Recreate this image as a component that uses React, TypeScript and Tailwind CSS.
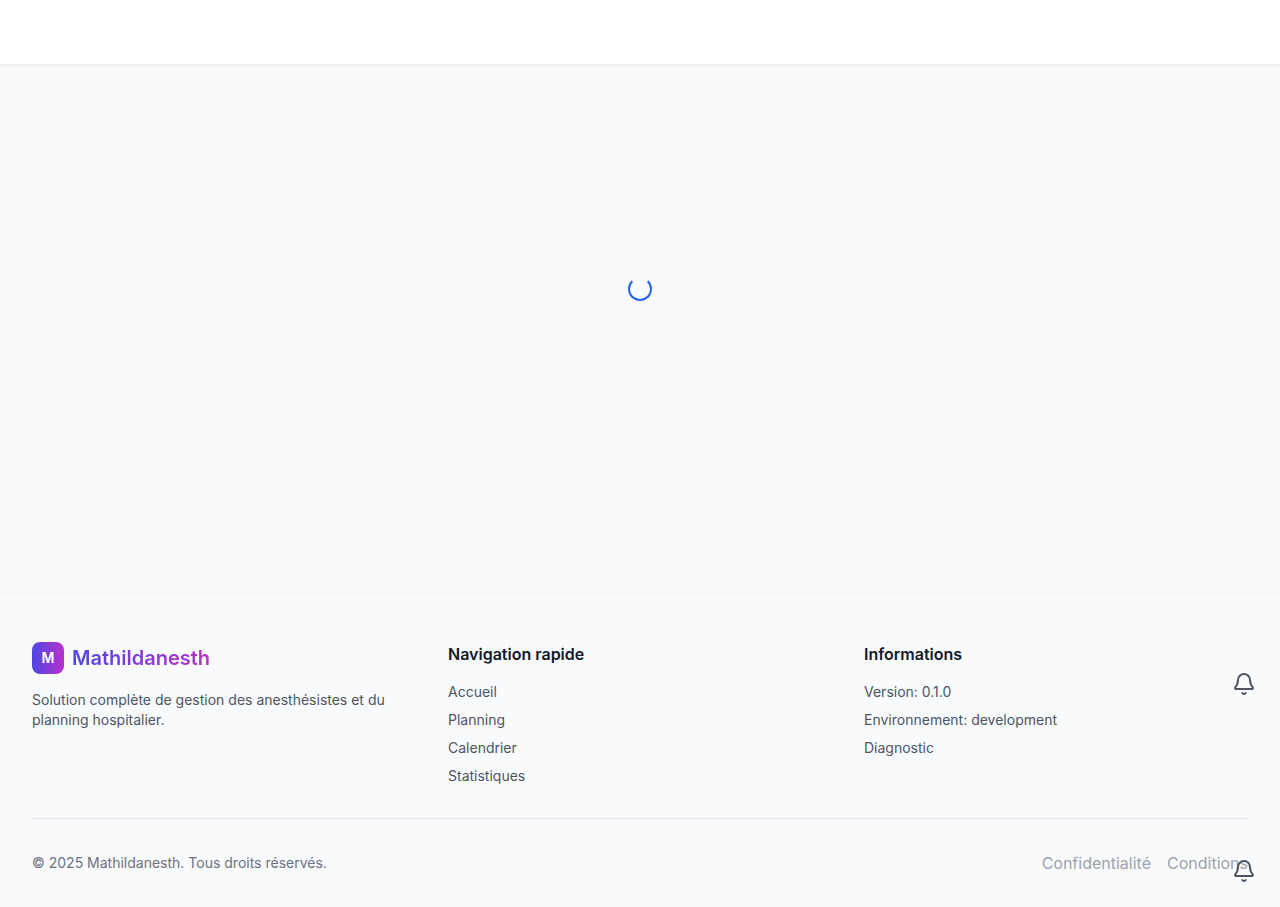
import { Bell } from "lucide-react";

const links = ["Accueil", "Planning", "Calendrier", "Statistiques"];

function BellButton() {
  return (
    <button type="button" aria-label="Notifications" className="p-2 text-[#4b5563]">
      <Bell size={24} aria-hidden="true" />
    </button>
  );
}

export default function App() {
  return (
    <div className="flex min-h-screen flex-col bg-[#f9fafc] font-[Inter,sans-serif] text-[#111827]">
      <header className="h-[67px] border-b-3 border-[#f1f2f4] bg-white" />
      <main className="flex grow flex-col items-center pt-[210px]">
        <div role="status" aria-label="Chargement" className="size-6 rounded-full border-2 border-[#2563eb] border-t-transparent" />
      </main>
      <footer className="border-t border-[#f3f4f6] px-8 pt-12 pb-8">
        <div className="grid grid-cols-3 gap-8">
          <div>
            <div className="flex items-center gap-2">
              <div className="flex size-8 items-center justify-center rounded-lg bg-[linear-gradient(to_right,#4f46e5,#b832c9)] text-sm font-semibold text-white">M</div>
              <span className="bg-[linear-gradient(to_right,#4f46e5,#b832c9)] bg-clip-text text-xl font-semibold text-transparent">Mathildanesth</span>
            </div>
            <p className="mt-4 text-sm text-[#4b5563]">Solution complète de gestion des anesthésistes et du planning hospitalier.</p>
          </div>
          <nav aria-label="Navigation rapide">
            <h3 className="mb-4 font-semibold">Navigation rapide</h3>
            <ul className="space-y-2 text-sm text-[#4b5563]">
              {links.map((l) => <li key={l}><a href="#">{l}</a></li>)}
            </ul>
          </nav>
          <div>
            <h3 className="mb-4 font-semibold">Informations</h3>
            <ul className="space-y-2 text-sm text-[#4b5563]">
              <li>Version: 0.1.0</li>
              <li>Environnement: development</li>
              <li><a href="#">Diagnostic</a></li>
            </ul>
          </div>
        </div>
        <div className="mt-8 flex items-center justify-between border-t border-[#e5e7eb] pt-8">
          <p className="text-sm text-[#6b7280]">© 2025 Mathildanesth. Tous droits réservés.</p>
          <div className="flex gap-4 text-[#9ca3af]">
            <a href="#">Confidentialité</a>
            <a href="#">Conditions</a>
          </div>
        </div>
      </footer>
      <div className="fixed right-4 bottom-4 flex flex-col gap-[147px]">
        <BellButton />
        <BellButton />
      </div>
    </div>
  );
}
